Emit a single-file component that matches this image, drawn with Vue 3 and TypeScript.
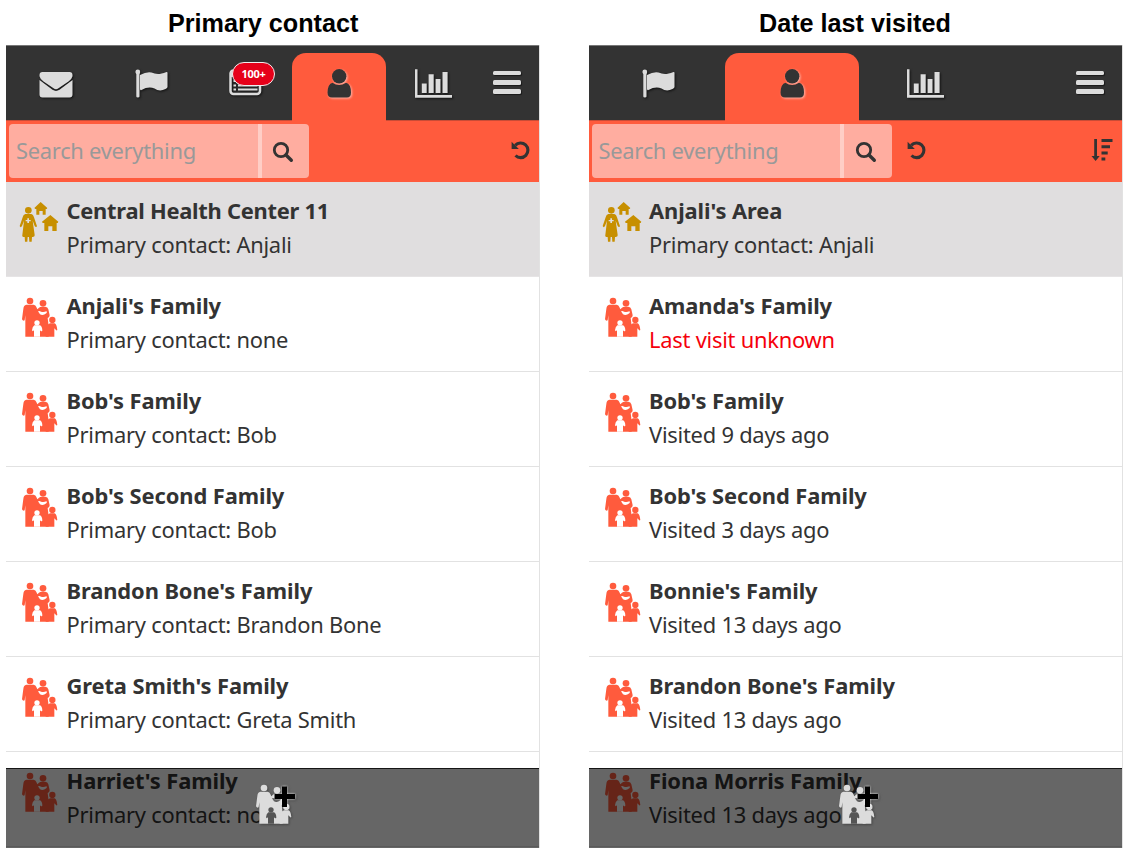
<script setup lang="ts">
type IconName = 'mail' | 'flag' | 'tasks' | 'person' | 'chart'

interface Tab {
  icon: IconName
  active?: boolean
  badge?: string
}

interface Row {
  name: string
  detail: string
  area?: boolean
  overdue?: boolean
}

interface Panel {
  title: string
  kind: string
  tabs: Tab[]
  sortable: boolean
  rows: Row[]
}

const panels: Panel[] = [
  {
    title: 'Primary contact',
    kind: 'primary',
    tabs: [
      { icon: 'mail' },
      { icon: 'flag' },
      { icon: 'tasks', badge: '100+' },
      { icon: 'person', active: true },
      { icon: 'chart' },
    ],
    sortable: false,
    rows: [
      { name: 'Central Health Center 11', detail: 'Primary contact: Anjali', area: true },
      { name: "Anjali's Family", detail: 'Primary contact: none' },
      { name: "Bob's Family", detail: 'Primary contact: Bob' },
      { name: "Bob's Second Family", detail: 'Primary contact: Bob' },
      { name: "Brandon Bone's Family", detail: 'Primary contact: Brandon Bone' },
      { name: "Greta Smith's Family", detail: 'Primary contact: Greta Smith' },
      { name: "Harriet's Family", detail: 'Primary contact: none' },
    ],
  },
  {
    title: 'Date last visited',
    kind: 'visits',
    tabs: [{ icon: 'flag' }, { icon: 'person', active: true }, { icon: 'chart' }],
    sortable: true,
    rows: [
      { name: "Anjali's Area", detail: 'Primary contact: Anjali', area: true },
      { name: "Amanda's Family", detail: 'Last visit unknown', overdue: true },
      { name: "Bob's Family", detail: 'Visited 9 days ago' },
      { name: "Bob's Second Family", detail: 'Visited 3 days ago' },
      { name: "Bonnie's Family", detail: 'Visited 13 days ago' },
      { name: "Brandon Bone's Family", detail: 'Visited 13 days ago' },
      { name: 'Fiona Morris Family', detail: 'Visited 13 days ago' },
    ],
  },
]
</script>

<template>
  <svg class="defs" width="0" height="0" aria-hidden="true">
    <symbol id="family" viewBox="0 0 150 180">
      <circle cx="45" cy="33" r="10" />
      <circle cx="84" cy="40" r="10" />
      <path d="M34 44H56Q62 45 64 51L67 58L72 53Q75 50 80 50H91Q98 50 100 58L104 76Q104 82 98 84L101 108V140H31V76L29 91Q24 94 21 88L25 57Q26 45 34 44Z" />
      <circle cx="112" cy="90" r="9.500" />
      <path d="M95 106L105 100H119Q125 102 127 120Q124 123 121 118L118 115V140H92Z" />
      <path class="hole" d="M69 64Q73 61 78 65Q86 68 94 64Q98 65 94 70Q84 78 75 73Z" />
      <circle class="hole" cx="66" cy="98.500" r="8" />
      <path class="hole" d="M58 106H75Q82 110 82 122Q79 126 75 121V140H57V121Q53 126 51 121Q52 110 58 106Z" />
    </symbol>
  </svg>

  <main class="board">
    <section v-for="panel in panels" :key="panel.kind" class="column" :class="panel.kind">
      <h2>{{ panel.title }}</h2>
      <div class="phone">
        <nav>
          <div class="tabs">
            <div v-for="tab in panel.tabs" :key="tab.icon" class="tab" :class="{ active: tab.active }">
              <svg viewBox="0 0 44 44" width="44" height="44">
                <g v-if="tab.icon === 'mail'" transform="translate(-.5)">
                  <path d="M5 14.300V13Q5 10 8 10H35Q38 10 38 13V14.300Q37.500 17 34 19.500L24 26.300Q21.500 28 19 26.300L9 19.500Q5.500 17 5 14.300Z" />
                  <path d="M5 18L18 27.800Q21.500 30 25 27.800L38 18V32.500Q38 35.500 35 35.500H8Q5 35.500 5 32.500Z" />
                </g>
                <g v-else-if="tab.icon === 'flag'" transform="translate(.5)">
                  <circle cx="8.300" cy="9.900" r="2.400" />
                  <path d="M6.800 10H10V34.500Q10 35.500 8.400 35.500T6.800 34.500Z" />
                  <path d="M10.500 13Q17 9.500 22 10.500C26 11.500 28 13.500 37 10Q38 9.700 38 11V25Q38 26 36 27Q30 30 25 26.500Q19 24 12 28Q10.500 28.500 10.500 27Z" />
                </g>
                <g v-else-if="tab.icon === 'tasks'">
                  <rect x="7.500" y="8.500" width="29.500" height="23.500" rx="3" fill="none" stroke="#dcdcdc" stroke-width="2.500" />
                  <path d="M10.500 18H13V20H10.500ZM10.500 22.500H13V24.500H10.500ZM10.500 26.500H13V28.500H10.500ZM15 18H34.500V20H15ZM15 22.500H34.500V24.500H15ZM15 26.500H34.500V28.500H15Z" />
                  <path d="M7 9H37V15H7Z" />
                </g>
                <g v-else-if="tab.icon === 'person'">
                  <circle cx="22.200" cy="14.300" r="7.200" />
                  <path d="M15.500 20.700Q22 25.500 29 20.700Q34 22 34 30.500Q34 35.500 30 35.500H15Q10.500 35.500 10.500 30.500Q10.700 22 15.500 20.700Z" />
                </g>
                <g v-else>
                  <path d="M4 7.300H6.500V33H41V35.700H4Z" />
                  <path d="M10.800 21.500H15.700V31H10.800ZM17.600 12.300H22.700V31H17.600ZM24.600 17H29.500V31H24.600ZM31.500 10H36.600V31H31.500Z" />
                </g>
              </svg>
              <span v-if="tab.badge" class="badge">{{ tab.badge }}</span>
            </div>
          </div>
          <div class="menu"><i /><i /><i /></div>
        </nav>

        <div class="filters">
          <div class="search">Search everything</div>
          <div class="go">
            <svg viewBox="0 0 22 22" width="22" height="22">
              <circle cx="9" cy="9" r="6.700" fill="none" stroke="#333" stroke-width="2.800" />
              <path d="M14 14L19.300 19.300" stroke="#333" stroke-width="3.400" stroke-linecap="round" />
            </svg>
          </div>
          <svg class="undo" viewBox="0 0 20 20" width="20" height="20">
            <path d="M4.200 5.400A7.300 7.300 0 1 1 4.500 15.500" fill="none" stroke="#333" stroke-width="3.100" />
            <path d="M.6 1.800V9H7.800Z" />
          </svg>
          <svg v-if="panel.sortable" class="sort" viewBox="0 0 22 22" width="22" height="22">
            <path d="M3.200 0H6V17H8.700L4.600 21.900L.5 17H3.200ZM10.500 0H21.500V3H10.500ZM10.500 6.200H19V9.200H10.500ZM10.500 12.400H16.700V15.400H10.500ZM10.500 18.500H14.300V21.500H10.500Z" />
          </svg>
        </div>

        <ul>
          <li v-for="row in panel.rows" :key="row.name" :class="{ area: row.area }">
            <svg v-if="row.area" class="place" viewBox="0 0 150 180" width="50" height="60">
              <circle cx="40" cy="46" r="10" />
              <path d="M31 57H49Q55 58 57 67L66 94Q63 99 59 93L53 77L59 120Q60 125 54 126H51L50 140H43L42 126H38L37 140H30L29 126H25Q20 125 22 120L27 77L21 93Q17 100 14 93L23 67Q25 58 31 57Z" />
              <path d="M77 21L97 39L95 42H92V59H83V48H73V59H64V42H61L58 39ZM106 60L130 80L128 84H125V108H112V94H100V108H88V84H83L81 80Z" />
              <path class="cross" d="M37 70H42V75H47V79H42V84H37V79H32V75H37Z" />
            </svg>
            <svg v-else class="family" width="50" height="60"><use href="#family" /></svg>
            <div class="copy">
              <strong>{{ row.name }}</strong>
              <span :class="{ overdue: row.overdue }">{{ row.detail }}</span>
            </div>
          </li>
        </ul>

        <div class="actions">
          <svg class="add" width="50" height="60" viewBox="0 0 50 60">
            <use href="#family" width="50" height="60" />
            <path class="plus" d="M33 9.500H38V17H46V22H38V30H33V22H25.500V17H33Z" />
          </svg>
        </div>
      </div>
    </section>
  </main>
</template>

<style>
body { margin: 0; background: #fff; }
</style>

<style scoped>
* { box-sizing: border-box; }
.defs { position: absolute; }
.board { display: flex; gap: 48.500px; padding-left: 6px; height: 853px; overflow: hidden; font-family: "Noto Sans", sans-serif; }
.column { width: 534px; flex: none; }
.column.visits { width: 534.500px; }
h2 { margin: 0; height: 45px; padding-left: 162px; font: bold 25.200px/46px "Liberation Sans", Arial, sans-serif; color: #000; white-space: nowrap; }
.visits h2 { padding-left: 170.500px; }
.phone { position: relative; height: 803px; overflow: hidden; border-right: 1px solid #e2e2e2; }
nav { height: 75px; margin-right: -1px; display: flex; align-items: flex-end; background: #333; border-top: 1px solid #777; }
.tabs { display: flex; height: 67px; padding-left: 4px; }
.tab { position: relative; width: 94px; height: 67px; padding-top: 9px; display: flex; justify-content: center; border-radius: 14px 14px 0 0; fill: #dcdcdc; }
.tab svg { filter: drop-shadow(1px 1px 1px #111); }
.visits .tabs { padding-left: 3px; }
.visits .tab { width: 133.500px; }
.tab.active { z-index: 1; height: 68px; background: #ff5b3d; fill: #333; }
.tab.active svg { filter: drop-shadow(1px 1px 1px #ffb8ac); }
.badge { position: absolute; left: 34px; top: 9px; width: 43px; height: 24px; border: 1.500px solid #eee; border-radius: 12px; background: #e60019; color: #fff; font: bold 11px/22px "Noto Sans", sans-serif; letter-spacing: -.3px; text-align: center; }
.menu { margin: 0 19px 26px auto; display: grid; gap: 4.500px; }
.menu i { width: 28px; height: 4.800px; border-radius: 1.500px; background: #dcdcdc; box-shadow: 1px 1px 1px #1a1a1a; }
.filters { height: 62px; margin-right: -1px; padding: 3px 9px 4px 3px; display: flex; background: #ff5b3d; border-top: 1px solid #c94c36; }
.search { width: 248.500px; height: 54px; padding-left: 7px; border-radius: 4px 0 0 4px; background: #ffada0; color: #999; font-size: 21.900px; letter-spacing: -.28px; line-height: 53px; }
.go { width: 51.500px; height: 54px; display: flex; align-items: center; padding-left: 10.500px; padding-top: 2px; border-left: 4px solid #ffcec6; border-radius: 0 4px 4px 0; background: #ffada0; }
.undo { margin: 16px 0 0 auto; fill: #333; }
.visits .undo { margin-left: 15px; }
.sort { margin: 15px 1px 0 auto; fill: #333; }
ul { list-style: none; margin: 0; padding: 0; }
li { height: 95px; display: flex; padding: 13px 0 0 9px; border-bottom: 1.500px solid #e2e2e2; color: #333; }
li.area { background: #e0dedf; border-color: #e6e4e5; margin-right: -1px; }
li svg { flex: none; }
.place { fill: #c78f00; }
.place .cross { fill: #e0dedf; }
.family { fill: #ff5b3d; color: #fff; }
.hole { fill: currentColor; }
.copy { margin: -1px 0 0 1.500px; display: flex; flex-direction: column; font-size: 21.900px; letter-spacing: -.24px; line-height: 33.500px; white-space: nowrap; }
.copy strong { font-weight: 700; letter-spacing: -.1px; }
.primary .area strong { letter-spacing: -.26px; }
.overdue { color: #f5000c; }
.actions { position: absolute; left: 0; right: -1px; bottom: 0; height: 80px; padding: 8px 0 0 2px; display: flex; justify-content: center; background: rgba(0, 0, 0, .6); border-top: 1.500px solid #161616; }
.add { fill: #dcdcdc; color: #555; filter: drop-shadow(1px 1px 1px #444); }
.plus { fill: #000; filter: drop-shadow(0 0 1px #fff); }
</style>
